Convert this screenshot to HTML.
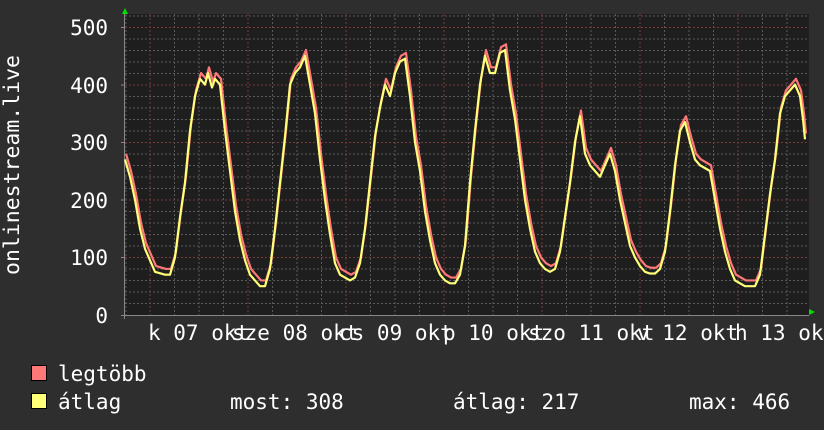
<!DOCTYPE html>
<html><head><meta charset="utf-8"><style>
html,body{margin:0;padding:0;background:#2e2e2e;}
body{width:824px;height:430px;overflow:hidden;position:relative;}
svg{position:absolute;left:0;top:0;}
text{font-family:"DejaVu Sans Mono","Liberation Mono",monospace;fill:#fff;font-size:21px;}
</style></head><body>
<svg width="824" height="430" viewBox="0 0 824 430">
<rect x="0" y="0" width="824" height="430" fill="#2e2e2e"/>
<rect x="125" y="14" width="684" height="301" fill="#1e1e1e"/>
<g stroke="#5a5a5a" stroke-width="1" stroke-dasharray="2,2" shape-rendering="crispEdges">
<path d="M125 303.5H809M125 292H809M125 280.5H809M125 269H809M125 246H809M125 234.5H809M125 223H809M125 211.5H809M125 188.5H809M125 177H809M125 165.5H809M125 154H809M125 131H809M125 119.5H809M125 108H809M125 96.5H809M125 73.5H809M125 62H809M125 50.5H809M125 39H809M125 16H809"/>
<path d="M174.5 14V315M199 14V315M223.5 14V315M272.5 14V315M297 14V315M321.5 14V315M370.5 14V315M395 14V315M419.5 14V315M468.5 14V315M493 14V315M517.5 14V315M566.5 14V315M591 14V315M615.5 14V315M664.5 14V315M689 14V315M713.5 14V315M762.5 14V315M787 14V315M126 14V315"/>
</g>
<g stroke="#7a3838" stroke-width="1" stroke-dasharray="2,2" shape-rendering="crispEdges">
<path d="M125 257.5H809M125 200H809M125 142.5H809M125 85H809M125 27.5H809"/>
<path d="M150 14V315M248 14V315M346 14V315M444 14V315M542 14V315M640 14V315M738 14V315"/>
</g>
<g stroke="#888" stroke-width="1" shape-rendering="crispEdges">
<path d="M121 315.5H809M124.5 14V319M121 257.5H125M121 200H125M121 142.5H125M121 85H125M121 27.5H125"/>
</g>
<polygon points="122,14 128,14 125,8" fill="#00e000"/>
<polygon points="809,309 809,315 815,312" fill="#00e000"/>
<g transform="translate(0,315) scale(1,-0.576)" fill="none" stroke-linejoin="round">
<polyline vector-effect="non-scaling-stroke" stroke="#ff7878" stroke-width="2.2" transform="translate(1,10)" points="125,270 130,240 135,200 140,150 145,115 150,95 155,75 165,70 170,70 175,100 180,170 185,230 190,320 195,380 200,410 205,400 208,420 212,395 215,410 220,400 225,320 230,250 235,180 240,130 245,95 250,70 255,60 260,50 265,50 270,80 275,150 280,230 285,310 290,400 295,420 300,430 305,450 310,400 315,350 320,270 325,200 330,140 335,90 340,70 345,65 350,60 355,65 360,90 365,150 370,230 375,310 380,360 385,400 390,380 395,420 400,440 405,445 410,380 415,300 420,250 425,180 430,130 435,90 440,70 445,60 450,55 455,55 460,70 465,120 470,230 475,320 480,400 485,450 490,420 495,420 500,455 505,460 510,390 515,340 520,270 525,200 530,150 535,110 540,90 545,80 550,75 555,80 560,110 565,170 570,230 575,300 580,345 585,280 590,260 595,250 600,240 605,260 610,280 615,250 620,200 625,160 630,120 635,100 640,85 645,75 650,72 655,72 660,80 665,110 670,180 675,260 680,320 685,335 690,300 695,270 700,260 705,255 710,250 715,200 720,150 725,110 730,80 735,60 740,55 745,50 750,50 755,50 760,70 765,140 770,210 775,270 780,350 785,380 790,390 795,400 800,380 803,340 805,305"/>
<polyline vector-effect="non-scaling-stroke" stroke="#ffff78" stroke-width="2.2" points="125,270 130,240 135,200 140,150 145,115 150,95 155,75 165,70 170,70 175,100 180,170 185,230 190,320 195,380 200,410 205,400 208,420 212,395 215,410 220,400 225,320 230,250 235,180 240,130 245,95 250,70 255,60 260,50 265,50 270,80 275,150 280,230 285,310 290,400 295,420 300,430 305,450 310,400 315,350 320,270 325,200 330,140 335,90 340,70 345,65 350,60 355,65 360,90 365,150 370,230 375,310 380,360 385,400 390,380 395,420 400,440 405,445 410,380 415,300 420,250 425,180 430,130 435,90 440,70 445,60 450,55 455,55 460,70 465,120 470,230 475,320 480,400 485,450 490,420 495,420 500,455 505,460 510,390 515,340 520,270 525,200 530,150 535,110 540,90 545,80 550,75 555,80 560,110 565,170 570,230 575,300 580,345 585,280 590,260 595,250 600,240 605,260 610,280 615,250 620,200 625,160 630,120 635,100 640,85 645,75 650,72 655,72 660,80 665,110 670,180 675,260 680,320 685,335 690,300 695,270 700,260 705,255 710,250 715,200 720,150 725,110 730,80 735,60 740,55 745,50 750,50 755,50 760,70 765,140 770,210 775,270 780,350 785,380 790,390 795,400 800,380 803,340 805,305"/>
</g>
<g text-anchor="end">
<text x="108" y="35">500</text>
<text x="108" y="93">400</text>
<text x="108" y="150">300</text>
<text x="108" y="208">200</text>
<text x="108" y="265">100</text>
<text x="108" y="323">0</text>
</g>
<text transform="translate(19,275) rotate(-90)" textLength="220" lengthAdjust="spacingAndGlyphs">onlinestream.live</text>
<g>
<text x="148" y="340">k 07 okt</text>
<text x="232" y="340">sze 08 okt</text>
<text x="339" y="340">cs 09 okt</text>
<text x="443" y="340">p 10 okt</text>
<text x="528" y="340">szo 11 okt</text>
<text x="637" y="340">v 12 okt</text>
<text x="735" y="340">h 13 okt</text>
</g>
<rect x="31.5" y="365.5" width="15" height="15" fill="#ff7878" stroke="#000" stroke-width="1"/>
<rect x="31.5" y="393.5" width="15" height="15" fill="#ffff78" stroke="#000" stroke-width="1"/>
<text x="58" y="381">legtöbb</text>
<text x="58" y="409">átlag</text>
<text x="230" y="409">most: 308</text>
<text x="453" y="409">átlag: 217</text>
<text x="689" y="409">max: 466</text>
</svg>
</body></html>
